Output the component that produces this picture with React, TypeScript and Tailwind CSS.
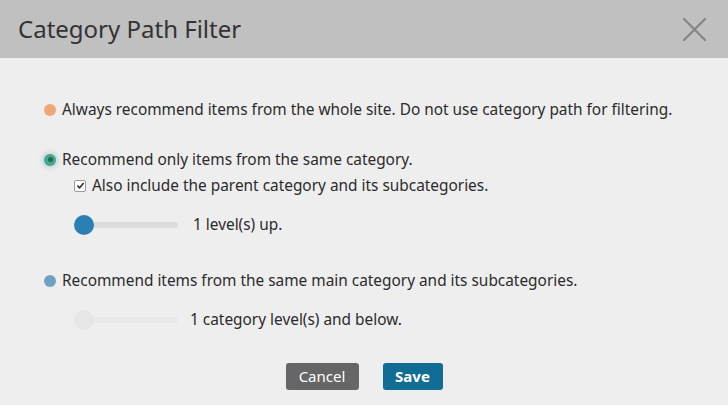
import React from 'react'

function Dot({ color, ring }: { color: string; ring?: boolean }) {
  return (
    <span
      className={`flex h-[12px] w-[12px] shrink-0 items-center justify-center rounded-full ${color} ${
        ring ? 'shadow-[0_0_4px_2px_rgba(90,170,220,0.35)]' : ''
      }`}
    >
      {ring && <span className="h-[5px] w-[5px] rounded-full bg-[#1f6b52]" />}
    </span>
  )
}

function Slider({ disabled }: { disabled?: boolean }) {
  return (
    <div className="relative h-5 w-[104px] shrink-0">
      <div
        className={`absolute left-[10px] right-0 top-[7px] h-[6px] rounded-full ${
          disabled ? 'bg-[#e9e9e9]' : 'bg-[#dcdcdc]'
        }`}
      />
      <div
        className={`absolute left-0 top-0 h-5 w-5 rounded-full ${
          disabled ? 'bg-[#e6e6e6]' : 'bg-[#2a7fb3]'
        }`}
      />
    </div>
  )
}

export default function App() {
  return (
    <div
      className="h-[405px] w-[728px] overflow-hidden bg-[#eeeeee] text-[#2b2b2b]"
      style={{ fontFamily: '"Noto Sans", "Open Sans", sans-serif' }}
    >
      <div className="flex h-[58px] items-center justify-between bg-[#c0c0c0] pl-[18px] pr-[21px]">
        <h1 className="text-[24px] leading-none text-[#333333]">Category Path Filter</h1>
        <svg width="25" height="25" viewBox="0 0 25 25" fill="none">
          <path d="M2 2 L23 23 M23 2 L2 23" stroke="#858585" strokeWidth="2.2" strokeLinecap="round" />
        </svg>
      </div>

      <div className="px-[44px] pt-[41px] text-[15.4px] leading-[21px]">
        <div className="flex items-center gap-[6px]">
          <Dot color="bg-[#eea777]" />
          <span>Always recommend items from the whole site. Do not use category path for filtering.</span>
        </div>

        <div className="mt-[29px] flex items-center gap-[6px]">
          <Dot color="bg-[#4aa685]" ring />
          <span>Recommend only items from the same category.</span>
        </div>
        <div className="mt-[5px] flex items-center gap-[6px] pl-[30px]">
          <span className="flex h-[12px] w-[12px] items-center justify-center rounded-[2px] border border-[#9a9a9a] bg-white">
            <svg width="9" height="9" viewBox="0 0 10 10">
              <path d="M1.5 5.2 L4 7.6 L8.5 2.2" stroke="#333" strokeWidth="1.8" fill="none" />
            </svg>
          </span>
          <span>Also include the parent category and its subcategories.</span>
        </div>
        <div className="mt-[18px] flex items-center gap-[15px] pl-[30px]">
          <Slider />
          <span>1 level(s) up.</span>
        </div>

        <div className="mt-[35px] flex items-center gap-[6px]">
          <Dot color="bg-[#6fa2c2]" />
          <span>Recommend items from the same main category and its subcategories.</span>
        </div>
        <div className="mt-[18px] flex items-center gap-[12px] pl-[30px]">
          <Slider disabled />
          <span>1 category level(s) and below.</span>
        </div>

        <div className="mt-[33px] flex justify-center gap-[24px]">
          <button className="h-[27px] w-[73px] rounded-[3px] bg-[#666666] text-[15px] text-white">
            Cancel
          </button>
          <button className="h-[27px] w-[60px] rounded-[3px] bg-[#126d95] text-[15px] font-bold text-white">
            Save
          </button>
        </div>
      </div>
    </div>
  )
}
